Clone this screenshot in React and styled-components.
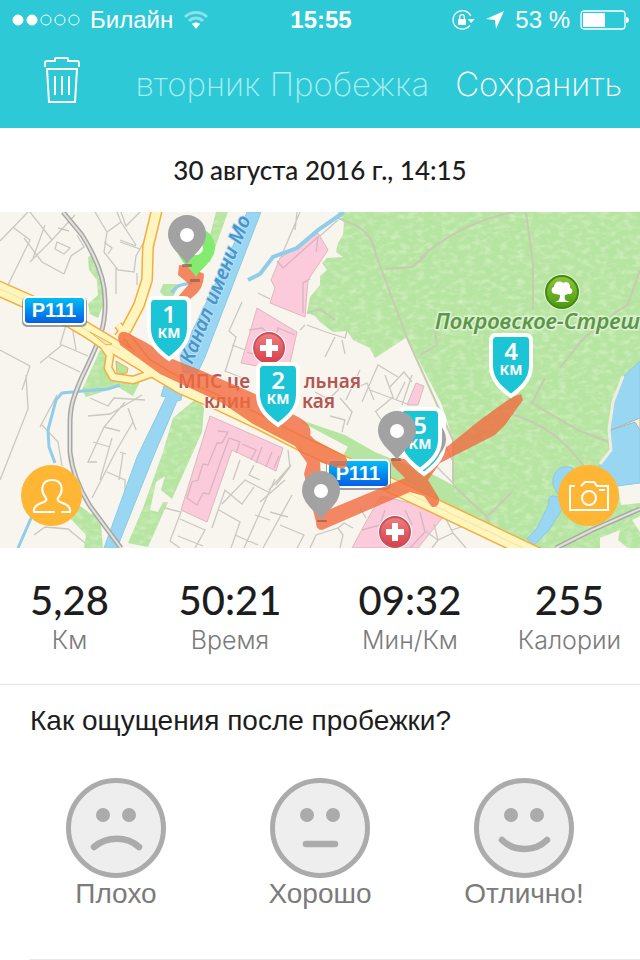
import { memo, useState } from 'react'
import styled, { createGlobalStyle } from 'styled-components'

const colors = {
  primary: '#2dc9d7',
  text: '#1d1d1d',
  grey70: '#7b7b7b',
  grey30: '#e6e6e6',
  face: '#ababab',
  accent: '#ffb635'
}

const GlobalStyle = createGlobalStyle`
  * {
    box-sizing: border-box;
  }

  body {
    margin: 0;
    background: white;
    color: ${colors.text};
    font-family: 'Liberation Sans', Arial, sans-serif;
  }

  h1, h2, p, dl, dd, fieldset, legend {
    margin: 0;
    padding: 0;
    border: 0;
    font-weight: 400;
  }
`

const stats = [
  { value: '5,28', label: 'Км' },
  { value: '50:21', label: 'Время' },
  { value: '09:32', label: 'Мин/Км' },
  { value: '255', label: 'Калории' }
]

const moods = [
  { id: 'bad', label: 'Плохо', mouth: 'M28 69 C41 58 61 58 73 69' },
  { id: 'good', label: 'Хорошо', mouth: 'M36 66 H65' },
  { id: 'great', label: 'Отлично!', mouth: 'M28 62 C40 74 61 74 73 62' }
]

const FOREST = 'M338 212 L344 223 L343 235 L338 243 L336 252 L343 257 L327 258 L322 263 L327 270 L320 276 L320 285 L310 297 L307 313 L315 316 L320 322 L333 332 L347 331 L353 340 L370 348 L375 358 L407 337 L425 375 L440 405 L453 442 L453 485 L438 483 L440 503 L527 548 H640 V212 Z'

const MOTORWAY = 'M-5 287 L70 320 L120 350 L180 386 L223 405 L257 421 L300 443 L345 464 L420 499 L540 556'

const RAILWAY = 'M63 212 L82 235 C94 254 105 276 105 300 C106 325 101 338 82 377 C72 400 70 408 70 425 V452 C72 472 80 490 90 506 L121 548 M556 548 L592 530 L640 509'

const Signal = () => (
  <svg width='68' height='14' viewBox='0 0 68 14' fill='none' stroke='white'>
    <circle cx='6' cy='7' r='5' fill='white' />
    <circle cx='20' cy='7' r='5' fill='white' />
    <circle cx='34' cy='7' r='5' />
    <circle cx='48' cy='7' r='5' />
    <circle cx='62' cy='7' r='5' />
  </svg>
)

const Wifi = () => (
  <svg width='26' height='20' viewBox='0 0 26 20' fill='none' strokeWidth='3'>
    <path d='M2 7 C8 1 18 1 24 7' stroke='#8be1e9' />
    <path d='M6 11 C10 7 16 7 20 11' stroke='#8be1e9' />
    <path d='M9 14 C11 12 15 12 17 14 L13 19 Z' fill='white' />
  </svg>
)

const RotationLock = () => (
  <svg width='24' height='22' viewBox='0 0 24 22' fill='none' stroke='white' strokeWidth='1.3'>
    <path d='M19.8 7 A9.3 9.3 0 1 0 19 16.2' />
    <path d='M16.8 10 H23.6 L20.2 14 Z' fill='white' stroke='none' />
    <rect x='7' y='10' width='8' height='6' rx='1' fill='white' stroke='none' />
    <path d='M8.7 10 V8 a2.3 2.3 0 0 1 4.6 0 V10' />
  </svg>
)

const Location = () => (
  <svg width='20' height='20' viewBox='0 0 20 20' fill='white'>
    <path d='M19 1 L11 19 L10 10 L1 9 Z' />
  </svg>
)

const Battery = () => (
  <svg width='50' height='20' viewBox='0 0 50 20' fill='none'>
    <rect x='1' y='1' width='44' height='18' rx='3' stroke='white' strokeWidth='1.3' />
    <rect x='3' y='3' width='22' height='14' rx='1' fill='white' />
    <path d='M46 7 C50 7 50 13 46 13 Z' fill='white' />
  </svg>
)

const Trash = () => (
  <svg width='38' height='48' viewBox='0 0 38 48' fill='none' stroke='white' strokeWidth='2'>
    <path d='M2 11 V7 Q2 5 4 5 H12 V3 Q12 2 13 2 H24 Q25 2 25 3 V5 H34 Q36 5 36 7 V11' />
    <path d='M4 13 H34 L32 46 H6 Z' />
    <path d='M12 20 V39 M19 20 V39 M26 20 V39' />
  </svg>
)

const Person = () => (
  <svg width='40' height='36' viewBox='0 0 40 36' fill='none' stroke='white' strokeWidth='2' strokeLinecap='round' strokeLinejoin='round'>
    <path d='M22 34 H2 C1 29 5 26 12 24 C14 23 15 22 14 20 C8 13 9 2 20 2 C31 2 32 13 26 20 C25 22 26 23 28 24 C35 26 39 29 38 34 H30' />
  </svg>
)

const Camera = () => (
  <svg width='42' height='32' viewBox='0 0 42 32' fill='none' stroke='white' strokeWidth='2'>
    <path d='M7 6 H2 V30 H40 V6 H29 L26 2 H17 L13 6' />
    <circle cx='21' cy='18' r='7' />
    <path d='M31 10 H37' />
  </svg>
)

const Shield = ({ x, y, number }) => (
  <g transform={`translate(${x} ${y})`}>
    <path
      d='M-15 2 H15 Q20 2 20 8 V33 C20 48 8 57 0 63 C-8 57 -20 48 -20 33 V8 Q-20 2 -15 2 Z'
      fill='#1cc5d5'
      stroke='white'
      strokeWidth='4'
    />
    { number && <ShieldNumber x='0' y='27'>{ number }</ShieldNumber> }
    { number && <ShieldUnit x='0' y='42'>КМ</ShieldUnit> }
  </g>
)

const Pin = ({ x, y, fill = '#a2a2a2' }) => (
  <g transform={`translate(${x} ${y})`}>
    <path d='M0 29 C-4 21 -19 13 -19 -1 A19 19 0 0 1 19 -1 C19 13 4 21 0 29 Z' fill={fill} />
    <circle r='7' fill='white' />
  </g>
)

const RoadSign = ({ x, y }) => (
  <g transform={`translate(${x} ${y})`}>
    <rect x='0' y='1' width='65' height='30' rx='5' fill='#6f7c86' opacity='0.7' />
    <rect x='1' y='0' width='63' height='29' rx='5' fill='white' />
    <rect x='3' y='2' width='59' height='25' rx='3' fill='url(#sign)' />
    <SignText x='32' y='21'>Р111</SignText>
  </g>
)

const Hospital = ({ x, y }) => (
  <g transform={`translate(${x} ${y})`}>
    <circle r='17' fill='white' />
    <circle r='15' fill='url(#hospital)' stroke='#c9505a' strokeWidth='2' />
    <path d='M-3 -9 H3 V-3 H9 V3 H3 V9 H-3 V3 H-9 V-3 H-3 Z' fill='white' />
  </g>
)

const RunMap = memo(() => (
  <MapDrawing viewBox='0 212 640 336' preserveAspectRatio='xMidYMid slice' role='img' aria-label='Маршрут пробежки'>
    <defs>
      <linearGradient id='sign' x2='0' y2='1'>
        <stop stopColor='#00bdf5' />
        <stop offset='1' stopColor='#065fe4' />
      </linearGradient>
      <linearGradient id='hospital' x2='0' y2='1'>
        <stop stopColor='#ee7f80' />
        <stop offset='1' stopColor='#d83f49' />
      </linearGradient>
      <linearGradient id='park' x2='0' y2='1'>
        <stop stopColor='#8cc63a' />
        <stop offset='1' stopColor='#4d9a10' />
      </linearGradient>
      <filter id='leaves' x='0' y='0' width='100%' height='100%' colorInterpolationFilters='sRGB'>
        <feTurbulence type='fractalNoise' baseFrequency='0.12 0.2' numOctaves='2' seed='4' />
        <feColorMatrix values='0 0 0 0 0.82  0 0 0 0 0.94  0 0 0 0 0.75  2 0 0 0 -0.85' />
        <feComposite in2='SourceGraphic' operator='in' result='spots' />
        <feMerge>
          <feMergeNode in='SourceGraphic' />
          <feMergeNode in='spots' />
        </feMerge>
      </filter>
    </defs>

    <rect y='212' width='640' height='336' fill='#f8f5ee' />

    {/* parks */}
    <g fill='#b6e4a1' filter='url(#leaves)'>
      <path d={FOREST} />
      <path d='M88 257 L93 254 L101 268 L105 300 L98 318 L90 314 L88 304 L98 295 L97 280 L89 270 Z' />
      <path d='M216 212 H228 L210 262 L204 262 L210 235 Z' />
      <path d='M163 284 L180 284 L170 302 L160 292 Z' />
      <path d='M100 350 L109 356 L107 375 L140 382 L133 396 L118 387 L86 397 L82 390 Z' />
      <path d='M197 398 L204 408 L202 432 L172 499 L161 490 L165 476 L156 482 L150 510 L158 512 L163 502 L168 502 L148 547 L128 543 L143 508 L163 452 L173 418 Z' />
      <path d='M70 518 L80 506 L91 514 L100 515 L103 548 H84 L86 535 Z' />
    </g>
    <path d='M375 359 L407 338 L442 405 L453 440 L453 483 L430 473 L405 464 L380 448 L340 430 L310 410 L305 370 L310 325 L318 322 L333 333 L347 332 L354 342 Z' fill='#f8f5ee' />
    <path d='M301 420 L345 435 L375 452 L392 459 L430 473 L453 485 L460 510 L408 484 L370 468 L312 440 Z' fill='#b6e4a1' />
    <path d='M618 486 L640 483 V503 L621 505 Z' fill='#f8f5ee' />
    <path d='M600 538 L620 530 L618 540 L628 548 H600 Z M632 520 L640 516 V532 Z' fill='#f8f5ee' />

    {/* hospital and campus grounds */}
    <g fill='#fbcadb' stroke='#dcb9bd' strokeWidth='1'>
      <path d='M318 233 L328 250 L308 280 L305 317 L270 303 L275 288 L271 280 L280 258 Z' />
      <path d='M257 308 L297 332 L288 372 L241 363 Z' />
      <path d='M210 416 L283 448 L276 471 L232 450 L207 522 L181 510 Z' />
      <path d='M381 496 L410 503 L443 517 L418 548 H352 L367 520 Z' />
      <path d='M416 383 L424 386 L418 405 H407 Z' />
    </g>

    {/* streets */}
    <g fill='none' stroke='#cbc7c1' strokeWidth='1.3'>
      <path d='M0 241 L28 212 M14 228 L30 240 L8 285 M30 212 L52 240 L75 215 M24 238 L42 262 L64 274 M45 225 L33 258 M52 240 L30 262 M57 242 L70 248 L64 254 L55 249 Z M69 231 L58 228 M64 274 L71 256 L84 247 L77 235' />
      <path d='M95 212 L107 232 L121 222 L117 212 M107 232 L104 252 L118 270 L134 272 L136 256 L145 240 M121 222 L136 245 M116 268 V294 M120 242 L140 249 M121 212 L126 226 L140 212 M136 246 L120 240 M104 242 L112 248 L108 254 M137 273 V285 M125 325 L147 278' />
      <path d='M0 350 L30 366 L22 390 M40 363 L62 345 L88 356 M49 357 L80 372 M60 345 L66 325 M72 326 L76 350 M0 480 L28 409 L26 375 M40 427 L57 395 M42 425 L58 442 L62 466' />
      <path d='M88 416 L110 414 L142 395 M90 398 L108 406 L114 398 L145 400 M125 402 L104 427 L88 462 L97 462 M128 408 L133 422 L115 453 L92 498 M104 427 L120 431 M93 442 L110 447 M100 480 L112 438 M107 472 L125 480 L125 496 M123 453 L119 480 M128 408 L136 430 M120 452 L126 454' />
      <path d='M34 535 L45 527 L68 529 L85 543 M165 508 L181 512 L170 541 L180 548 M180 519 L205 530 L195 548 M178 536 L203 546' />
      <path d='M300 212 L281 257 M295 230 L297 212 M338 220 L320 236 M242 302 L229 331 L236 337 L225 372 M225 371 L248 380 M232 345 L245 350 M258 293 L270 299 M307 325 L326 332 L345 338 L347 331 M342 340 L345 354 M335 337 L325 357 M300 330 L305 325' />
      <path d='M356 388 L367 383 L374 400 M346 400 L360 370 M362 402 L378 365 L398 377 M385 375 L393 397 L375 412 M344 378 L338 390 L328 400 M370 390 L410 405 M389 388 L404 372 L412 382 M396 400 L405 382 M376 412 L384 424 M340 398 L352 412 L347 425 M315 392 L332 401 M330 416 L345 420 L342 432 M402 405 L412 375 M443 440 L452 460 M425 455 L453 483 M434 460 L445 444' />
      <path d='M212 528 L225 490 L242 504 L254 487 M219 510 L240 522 L231 548 M222 504 L245 480 L268 492 M240 460 L233 480 M254 465 L249 475 L260 480 M269 490 L291 465 M260 502 L285 480 M244 548 L275 479 M263 548 L292 495 M270 512 L288 517 M235 535 L258 545 M280 525 L304 535 L297 548 M255 515 L270 520 M288 450 L290 467 L276 485 M310 548 L316 535 L338 528 L343 535 L340 548 M338 528 L344 523 L353 528 M360 508 L366 518' />
      <path d='M425 531 L438 540 L453 533 L466 548 M434 524 L438 540 L432 548 M445 517 L453 533 M452 530 L470 524' />
    </g>
    <g fill='none' stroke='#d9b5c0' strokeWidth='1.3'>
      <path d='M277 261 L283 268 L319 236 M318 237 L316 252 M310 279 L303 283 L303 313 M249 330 L262 328 L275 340 L278 328 L295 335 M247 352 L258 356' />
      <path d='M218 431 L228 432 L222 443 L217 443 L208 465 L203 464 L198 480 L192 482 L187 498 L197 505 L203 493 L209 494 L229 438 L240 442 L236 453 M242 444 L256 450 L251 460 M262 447 L256 463 M272 452 L266 467 M279 456 L274 468' />
      <path d='M362 530 L380 525 L385 510 M420 512 L425 532 L410 548 M405 510 L412 525' />
    </g>

    {/* forest paths */}
    <g fill='none' stroke='#c5ccb0' strokeWidth='2'>
      <path d='M338 218 C360 226 372 232 376 255 L392 298 L407 338 M385 269 L412 267 L426 255 M420 258 C450 232 480 218 515 212 M526 212 L533 265 V310 M640 270 L628 304 L602 322 L582 340 L560 368 M420 355 L437 345 L435 330 M307 313 L320 309 L335 320 M512 414 C545 425 565 440 585 468 M530 402 L578 430 L609 442 M545 378 L532 403 M453 485 L487 517 L512 492 M487 517 L490 528 M609 430 L610 452 M407 338 L453 440 V484' />
    </g>

    {/* water */}
    <g fill='#98d6f2' stroke='#8ccae6' strokeWidth='1'>
      <path d='M247 212 H261 L205 357 L196 376 L183 372 L180 356 L228 258 Z' />
      <path d='M164 386 L183 390 L181 400 L177 401 L154 455 L117 548 H104 L137 457 L166 397 L161 396 Z' />
      <path d='M640 361 L622 378 L614 402 L609 430 L612 450 L600 465 L592 480 L617 486 L640 483 Z' />
      <path d='M573 468 C556 462 548 480 556 491 L560 498 C552 493 546 498 549 504 L545 512 L537 528 L527 539 L534 545 L549 530 L560 513 L568 495 Z' />
    </g>
    <g fill='none' stroke='#8fcdea'>
      <path d='M248 280 L260 274 L273 257 L297 248 L318 230 L337 217 L344 212' strokeWidth='4' />
      <path d='M120 385 L108 389 L83 391 L62 393 L56 400 L52 415 L48 430 L49 447 L55 463 M32 516 L18 548' strokeWidth='3' />
      <path d='M172 293 C174 286 182 284 192 283' strokeWidth='3' />
    </g>
    <path d='M611 430 L640 418 V430 L635 422 Z' fill='#f3f0e4' stroke='#aab5b4' />
    <path d='M623 376 L613 402 L609 430 L611 450 L600 464' fill='none' stroke='#efeede' strokeWidth='3' />

    {/* railways */}
    <path d={RAILWAY} fill='none' stroke='#a7a7a5' strokeWidth='5' />
    <path d={RAILWAY} fill='none' stroke='#e3e1dd' strokeWidth='2' />

    {/* motorways: an orange casing under a pale fill */}
    <g fill='none' strokeLinejoin='round'>
      <path d='M200 380 L300 428 L345 452' stroke='#f8f5ee' strokeWidth='12' />
      <g stroke='#f3ae3d'>
        <path d={MOTORWAY} strokeWidth='16' />
        <path d='M158 205 L148 247 L147 280 L139 305 L127 328 L119 338' strokeWidth='12' />
        <path d='M70 322 L103 345 L110 355 L108 368 L113 377 L133 380 L150 374 L120 345 M118 325 L150 366 L194 390' strokeWidth='9' />
      </g>
      <g stroke='#fff6bf'>
        <path d={MOTORWAY} strokeWidth='13' />
        <path d='M158 205 L148 247 L147 280 L139 305 L127 328 L119 338' strokeWidth='9' />
        <path d='M70 322 L103 345 L110 355 L108 368 L113 377 L133 380 L150 374 L120 345 M118 325 L150 366 L194 390' strokeWidth='6' />
      </g>
      <path d='M0 289 L70 320 L120 350 M345 464 L420 499 L540 556' stroke='#fbe08d' />
      <path d='M90 332 L112 344 L106 345 Z' fill='#f8e8a5' stroke='#f3ae3d' />
      <path d='M116 361 L128 368 L127 373 L117 374 Z' fill='#b6e4a1' stroke='#f3ae3d' />
    </g>

    <WaterLabel transform='translate(192 365) rotate(-68)'>Канал имени Мо</WaterLabel>
    <HospitalLabel x='178' y='388'>МПС це</HospitalLabel>
    <HospitalLabel x='361' y='388' textAnchor='end'>льная</HospitalLabel>
    <HospitalLabel x='204' y='408'>клин</HospitalLabel>
    <HospitalLabel x='335' y='408' textAnchor='end'>кая</HospitalLabel>
    <ParkLabel x='640' y='329' textAnchor='end'>Покровское-Стреш</ParkLabel>

    <Hospital x='269' y='348' />
    <Hospital x='395' y='532' />
    <g transform='translate(562 292)'>
      <circle r='18' fill='#e3f4d5' />
      <circle r='16' fill='url(#park)' stroke='#448b13' strokeWidth='2' />
      <path d='M-7 10 C-3 9 -2 7 -2 3 L-6 2 C-12 2 -11 -5 -8 -5 C-8 -10 -2 -12 1 -9 C5 -12 9 -8 8 -4 C12 -3 11 3 6 2 L3 3 C2 7 3 9 8 10 Z' fill='white' />
    </g>

    <RoadSign x='22' y='296' />
    <RoadSign x='326' y='459' />

    {/* route, translucent so that streets show under it */}
    <g fill='#f16c40' opacity='0.8'>
      <path d='M118 338 Q119 329 128 333 L147 343 L170 358 L200 370 L253 393 L300 418 Q313 426 310 435 L315 440 L345 456 Q351 464 343 469 L335 467 L320 462 L323 512 L405 478 L393 466 Q388 457 396 458 L425 462 L448 446 L480 420 L512 397 L521 394 L523 400 L505 425 L495 435 L440 463 L428 480 L439 498 Q440 508 432 507 L424 496 L410 492 L322 530 Q316 530 316 522 L308 490 L304 474 L307 463 L295 446 L253 424 L222 403 L160 374 L120 345 Z' />
      <path d='M179 265 L188 266 L204 274 Q204 288 194 296 L186 302 L177 298 L189 284 L178 275 Z' />
    </g>
    <Pin x='196' y='248' fill='#82eb70' />
    <g fill='#925d4f' opacity='0.7'>
      <rect x='182' y='264' width='10' height='3' rx='1' />
      <rect x='190' y='279' width='10' height='3' rx='1' />
      <rect x='391' y='458' width='10' height='3' rx='1' />
      <rect x='317' y='520' width='10' height='2' rx='1' />
    </g>

    <Shield x={169} y={296} number='1' />
    <Shield x={278} y={362} number='2' />
    <Shield x={511} y={333} number='4' />
    <Shield x={424} y={411} />
    <Pin x='427' y='440' />
    <Shield x={420} y={407} number='5' />
    <Pin x='187' y='235' />
    <Pin x='397' y='431' />
    <Pin x='321' y='491' />
  </MapDrawing>
))

const Face = ({ mouth }) => (
  <svg width='100' height='100' viewBox='0 0 100 100' fill='none'>
    <circle cx='50' cy='50' r='47.5' fill='#eeeeee' stroke={colors.face} strokeWidth='5' />
    <circle cx='37' cy='37' r='7' fill={colors.face} />
    <circle cx='63' cy='37' r='7' fill={colors.face} />
    <path d={mouth} stroke={colors.face} strokeWidth='6.5' strokeLinecap='round' />
  </svg>
)

const App = () => {
  const [mood, setMood] = useState('')

  return (
    <>
      <GlobalStyle />
      <Header>
        <StatusBar>
          <StatusGroup>
            <Signal />
            <span>Билайн</span>
            <Wifi />
          </StatusGroup>
          <Clock>15:55</Clock>
          <StatusGroup end>
            <RotationLock />
            <Location />
            <span>53 %</span>
            <Battery />
          </StatusGroup>
        </StatusBar>
        <NavBar>
          <IconButton type='button' aria-label='Удалить'><Trash /></IconButton>
          <Title>вторник Пробежка</Title>
          <SaveButton type='button'>Сохранить</SaveButton>
        </NavBar>
      </Header>
      <main>
        <RunDate>30 августа 2016 г., 14:15</RunDate>
        <MapArea>
          <RunMap />
          <RoundButton type='button' side='left' aria-label='Профиль'><Person /></RoundButton>
          <RoundButton type='button' side='right' aria-label='Добавить фото'><Camera /></RoundButton>
        </MapArea>
        <Stats>
          { stats.map(({ value, label }) => (
            <Stat key={label}>
              <StatLabel>{ label }</StatLabel>
              <StatValue>{ value }</StatValue>
            </Stat>
          )) }
        </Stats>
        <Feelings>
          <Question>Как ощущения после пробежки?</Question>
          <Moods>
            { moods.map(({ id, label, mouth }) => (
              <Mood key={id} htmlFor={id}>
                <HiddenInput
                  type='radio'
                  id={id}
                  name='mood'
                  checked={mood === id}
                  onChange={() => setMood(id)}
                />
                <Face mouth={mouth} />
                <span>{ label }</span>
              </Mood>
            )) }
          </Moods>
        </Feelings>
        <Divider />
      </main>
    </>
  )
}

const Header = styled.header`
  background: ${colors.primary};
  color: white;
`

const StatusBar = styled.div`
  display: grid;
  grid-template-columns: 1fr auto 1fr;
  align-items: center;
  height: 40px;
  padding: 0 10px 0 12px;
  font-size: 24px;
`

const StatusGroup = styled.div.withConfig({ shouldForwardProp: prop => prop !== 'end' })`
  display: flex;
  align-items: center;
  justify-content: ${({ end }) => end ? 'flex-end' : 'flex-start'};
  gap: 10px;
  white-space: nowrap;
`

const Clock = styled.time`
  font-weight: 700;
`

const NavBar = styled.div`
  display: flex;
  align-items: center;
  justify-content: space-between;
  height: 88px;
  padding: 0 18px 0 32px;
`

const IconButton = styled.button`
  display: flex;
  padding: 0 11px 8px;
  border: 0;
  background: none;
  cursor: pointer;
`

const Title = styled.h1`
  flex: 1;
  padding-right: 26px;
  color: #a9ecf2;
  font-family: Inter, sans-serif;
  font-size: 33px;
  font-weight: 200;
  text-align: right;
  white-space: nowrap;
`

const SaveButton = styled.button`
  padding: 0;
  border: 0;
  background: none;
  color: white;
  font-family: Inter, sans-serif;
  font-size: 33px;
  font-weight: 200;
  cursor: pointer;
`

const RunDate = styled.p`
  padding: 24px 16px;
  font-family: Lato, sans-serif;
  font-size: 26px;
  font-weight: 500;
  line-height: 36px;
  text-align: center;
`

const MapArea = styled.section`
  position: relative;
  height: 336px;
  overflow: hidden;
`

const MapDrawing = styled.svg`
  display: block;
  width: 100%;
  height: 100%;
`

const ShieldNumber = styled.text`
  fill: white;
  font: 600 24px 'Noto Sans', sans-serif;
  text-anchor: middle;
`

const ShieldUnit = styled(ShieldNumber)`
  font-size: 14px;
  font-weight: 700;
`

const SignText = styled(ShieldNumber)`
  font-family: 'Liberation Sans', sans-serif;
  font-size: 20px;
  font-weight: 700;
`

const MapLabel = styled.text`
  font: 600 19px 'Noto Sans', sans-serif;
  stroke: #f8f5ee;
  stroke-width: 2px;
  paint-order: stroke;
`

const HospitalLabel = styled(MapLabel)`
  fill: #b45654;
`

const ParkLabel = styled(MapLabel)`
  fill: #5b9748;
  font-size: 22px;
  font-style: italic;
  stroke: #dff2d3;
  stroke-width: 3px;
`

const WaterLabel = styled(MapLabel)`
  fill: #4b95cb;
  font-size: 20px;
  font-style: italic;
  stroke: #b4e1f5;
`

const RoundButton = styled.button.withConfig({ shouldForwardProp: prop => prop !== 'side' })`
  position: absolute;
  ${({ side }) => side}: 21px;
  bottom: 22px;
  display: flex;
  align-items: center;
  justify-content: center;
  width: 61px;
  height: 61px;
  padding: 0;
  border: 0;
  border-radius: 50%;
  background: ${colors.accent};
  cursor: pointer;
`

const Stats = styled.dl`
  display: grid;
  grid-template-columns: 139fr 182fr 178fr 141fr;
  padding: 28px 0;
  border-bottom: 1px solid ${colors.grey30};
`

const Stat = styled.div`
  display: flex;
  flex-direction: column-reverse;
  align-items: center;
`

const StatValue = styled.dd`
  font-family: Lato, sans-serif;
  font-size: 40px;
  font-weight: 500;
  line-height: 48px;
`

const StatLabel = styled.dt`
  color: ${colors.grey70};
  font-family: Inter, sans-serif;
  font-size: 25px;
  font-weight: 300;
  line-height: 32px;
`

const Feelings = styled.fieldset`
  min-width: 0;
`

const Question = styled.legend`
  padding: 20px 30px 0;
  font-size: 28px;
  line-height: 32px;
`

const Moods = styled.div`
  display: grid;
  grid-template-columns: repeat(3, 1fr);
  padding: 41px 14px 49px;
`

const Mood = styled.label`
  position: relative;
  display: flex;
  flex-direction: column;
  align-items: center;
  color: ${colors.grey70};
  font-size: 28px;
  line-height: 32px;
  cursor: pointer;
`

const HiddenInput = styled.input`
  position: absolute;
  opacity: 0;
  width: 100px;
  height: 100px;
  margin: 0;
`

const Divider = styled.hr`
  height: 1px;
  margin: 0 0 0 30px;
  border: 0;
  background: ${colors.grey30};
`

export default App
